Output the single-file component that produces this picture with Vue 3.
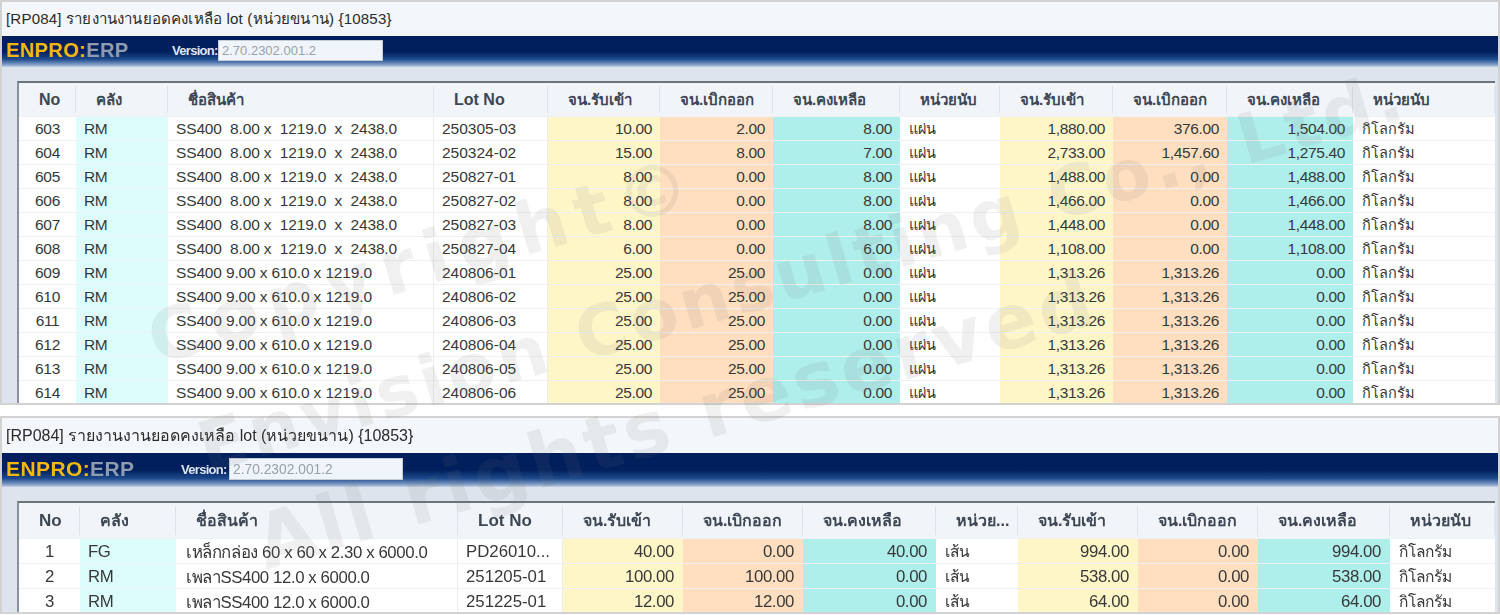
<template>
  <div class="page">
    <section v-for="win in windows" :key="win.id" class="report" :class="win.id">
      <div class="title">[RP084] รายงานงานยอดคงเหลือ lot (หน่วยขนาน) {10853}</div>
      <div class="brand-bar">
        <div class="logo"><span class="logo-gold">ENPRO:</span><span class="logo-grey">ERP</span></div>
        <label class="version">Version:</label>
        <div class="version-box">2.70.2302.001.2</div>
      </div>
      <div class="body">
        <div class="grid">
          <div class="row head" :style="{ gridTemplateColumns: win.columns }">
            <div v-for="(h, i) in win.headers" :key="i" class="th" :class="{ latin: i === 0 || i === 3 }">{{ h }}</div>
          </div>
          <div v-for="r in win.rows" :key="r[0]" class="row line" :style="{ gridTemplateColumns: win.columns }">
            <div class="td center">{{ r[0] }}</div>
            <div class="td stock">{{ r[1] }}</div>
            <div class="td name">{{ r[2] }}</div>
            <div class="td lot">{{ r[3] }}</div>
            <div class="td num in">{{ r[4] }}</div>
            <div class="td num out">{{ r[5] }}</div>
            <div class="td num rem">{{ r[6] }}</div>
            <div class="td unit">{{ r[7] }}</div>
            <div class="td num in">{{ r[8] }}</div>
            <div class="td num out">{{ r[9] }}</div>
            <div class="td num rem">{{ r[10] }}</div>
            <div class="td unit">{{ r[11] }}</div>
          </div>
        </div>
      </div>
    </section>
    <div class="wm wm-copy">Copyright©</div>
    <div class="wm wm-main">Envision Consulting Co., Ltd.</div>
    <div class="wm wm-sub">All rights reserved</div>
  </div>
</template>

<script setup>
const big = 'SS400  8.00 x  1219.0  x  2438.0'
const small = 'SS400 9.00 x 610.0 x 1219.0'
const plate = 'แผ่น'
const kg = 'กิโลกรัม'
const bar = 'เส้น'

const top = [
  ['603', big, '250305-03', '10.00', '2.00', '8.00', '1,880.00', '376.00', '1,504.00'],
  ['604', big, '250324-02', '15.00', '8.00', '7.00', '2,733.00', '1,457.60', '1,275.40'],
  ['605', big, '250827-01', '8.00', '0.00', '8.00', '1,488.00', '0.00', '1,488.00'],
  ['606', big, '250827-02', '8.00', '0.00', '8.00', '1,466.00', '0.00', '1,466.00'],
  ['607', big, '250827-03', '8.00', '0.00', '8.00', '1,448.00', '0.00', '1,448.00'],
  ['608', big, '250827-04', '6.00', '0.00', '6.00', '1,108.00', '0.00', '1,108.00'],
  ['609', small, '240806-01', '25.00', '25.00', '0.00', '1,313.26', '1,313.26', '0.00'],
  ['610', small, '240806-02', '25.00', '25.00', '0.00', '1,313.26', '1,313.26', '0.00'],
  ['611', small, '240806-03', '25.00', '25.00', '0.00', '1,313.26', '1,313.26', '0.00'],
  ['612', small, '240806-04', '25.00', '25.00', '0.00', '1,313.26', '1,313.26', '0.00'],
  ['613', small, '240806-05', '25.00', '25.00', '0.00', '1,313.26', '1,313.26', '0.00'],
  ['614', small, '240806-06', '25.00', '25.00', '0.00', '1,313.26', '1,313.26', '0.00']
].map(r => [r[0], 'RM', r[1], r[2], r[3], r[4], r[5], plate, r[6], r[7], r[8], kg])

const bottom = [
  ['1', 'FG', 'เหล็กกล่อง 60 x 60 x 2.30 x 6000.0', 'PD26010...', '40.00', '0.00', '40.00', bar, '994.00', '0.00', '994.00', kg],
  ['2', 'RM', 'เพลาSS400 12.0 x 6000.0', '251205-01', '100.00', '100.00', '0.00', bar, '538.00', '0.00', '538.00', kg],
  ['3', 'RM', 'เพลาSS400 12.0 x 6000.0', '251225-01', '12.00', '12.00', '0.00', bar, '64.00', '0.00', '64.00', kg]
]

const windows = [
  {
    id: 'first',
    columns: '57px 92px 266px 114px 112px 113px 127px 100px 113px 114px 126px 1fr',
    headers: ['No', 'คลัง', 'ชื่อสินค้า', 'Lot No', 'จน.รับเข้า', 'จน.เบิกออก', 'จน.คงเหลือ', 'หน่วยนับ', 'จน.รับเข้า', 'จน.เบิกออก', 'จน.คงเหลือ', 'หน่วยนับ'],
    rows: top
  },
  {
    id: 'second',
    columns: '61px 96px 282px 105px 120px 120px 133px 82px 120px 120px 132px 1fr',
    headers: ['No', 'คลัง', 'ชื่อสินค้า', 'Lot No', 'จน.รับเข้า', 'จน.เบิกออก', 'จน.คงเหลือ', 'หน่วย...', 'จน.รับเข้า', 'จน.เบิกออก', 'จน.คงเหลือ', 'หน่วยนับ'],
    rows: bottom
  }
]
</script>

<style>
html, body {
  margin: 0;
  background: #fff;
}
</style>

<style scoped>
.page {
  position: relative;
  width: 1500px;
  height: 615px;
  overflow: hidden;
  font-family: "Liberation Sans", "Noto Sans", sans-serif;
  color: #333;
  filter: blur(0.4px);
}

.report {
  border: 2px solid #d2d2d2;
  background: #dde4ed;
  overflow: hidden;
  box-sizing: border-box;
}

.first {
  height: 405px;
  margin-bottom: 11px;
}

.second {
  height: 198px;
}

.title {
  display: flex;
  align-items: center;
  background: #f3f6fa;
  padding-left: 4px;
  color: #2b2b2b;
}

.first .title {
  height: 34px;
  font-size: 15.1px;
  letter-spacing: 0.17px;
}

.second .title {
  height: 35px;
  font-size: 16px;
}

.brand-bar {
  display: flex;
  align-items: center;
  background: linear-gradient(#001f5c 0%, #001f5c 50%, #1d4a8c 75%, #7f9cc4 92%, #c5d2e2 100%);
  padding: 0 0 2px 4px;
  box-sizing: border-box;
}

.first .brand-bar {
  height: 31px;
}

.second .brand-bar {
  height: 34px;
}

.logo {
  font-size: 20px;
  font-weight: 700;
  letter-spacing: 0.4px;
}

.first .logo {
  width: 166px;
}

.second .logo {
  width: 175px;
  font-size: 21px;
}

.logo-gold {
  color: #f2b80f;
}

.logo-grey {
  color: #8f9cae;
}

.version {
  font-size: 13px;
  font-weight: 700;
  letter-spacing: -0.7px;
  color: #dfe7f2;
  width: 46px;
}

.second .version {
  width: 48px;
}

.version-box {
  background: #f0f5fb;
  border: 1px solid #c4ccd6;
  color: #9aa0a8;
  padding-left: 3px;
  box-sizing: border-box;
  display: flex;
  align-items: center;
}

.first .version-box {
  width: 165px;
  height: 21px;
  font-size: 13px;
}

.second .version-box {
  width: 174px;
  height: 22px;
  font-size: 13.8px;
}

.body {
  padding: 14px 0 0 15px;
}

.grid {
  border-top: 2px solid #6d737b;
  border-left: 2px solid #8a9098;
  background: #fff;
  width: 1476px;
  overflow: hidden;
}

.first .grid {
  height: 322px;
}

.second .grid {
  height: 112px;
}

.row {
  display: grid;
}

.head {
  background: #f1f4f9;
  font-weight: 700;
}

.first .head {
  height: 33px;
}

.second .head {
  height: 35px;
}

.th {
  display: flex;
  align-items: center;
  margin: 3px 0;
  padding-left: 20px;
  border-right: 1px solid #e0e4ea;
  font-size: 15px;
  color: #3d4654;
  white-space: nowrap;
}

.second .th {
  font-size: 16px;
}

.th.latin {
  font-size: 16px;
}

.second .th.latin {
  font-size: 17px;
}

.line {
  border-top: 1px solid #eef0f3;
}

.first .line {
  height: 23px;
}

.second .line {
  height: 24px;
}

.td {
  display: flex;
  align-items: center;
  font-size: 15.5px;
  letter-spacing: -0.35px;
  color: #383838;
  white-space: pre;
  overflow: hidden;
  padding-left: 8px;
}

.second .td {
  font-size: 16.8px;
  letter-spacing: -0.4px;
  padding-top: 1px;
}

.center {
  justify-content: center;
  padding-left: 0;
}

.stock {
  background: #ddfdfd;
}

.name,
.lot {
  border-right: 1px solid #ececec;
}

.td.name {
  letter-spacing: -0.15px;
}

.second .td.name {
  letter-spacing: -0.4px;
  padding-left: 10px;
}

.td.lot {
  letter-spacing: 0;
}

.td.num {
  justify-content: flex-end;
  padding-left: 0;
  padding-right: 8px;
}

.second .td.num {
  padding-right: 9px;
}

.in {
  background: #fff6c8;
}

.out {
  background: #ffdfbf;
}

.rem {
  background: #aeeeeb;
}

.td.unit {
  font-size: 14.5px;
  letter-spacing: 0;
  padding-left: 9px;
}

.second .td.unit {
  font-size: 15.5px;
  letter-spacing: 0;
}

.wm {
  position: absolute;
  height: 80px;
  line-height: 80px;
  transform: rotate(-16.5deg);
  transform-origin: 0 50%;
  font-family: "DejaVu Sans", sans-serif;
  font-weight: 700;
  color: rgba(120, 120, 120, 0.11);
  white-space: nowrap;
  pointer-events: none;
}

.wm-copy {
  left: 150px;
  top: 301px;
  font-size: 72px;
  letter-spacing: 10px;
}

.wm-main {
  left: 200px;
  top: 410px;
  font-size: 70px;
  letter-spacing: 4.2px;
}

.wm-sub {
  left: 258px;
  top: 505px;
  font-size: 76px;
  letter-spacing: 4px;
}
</style>
